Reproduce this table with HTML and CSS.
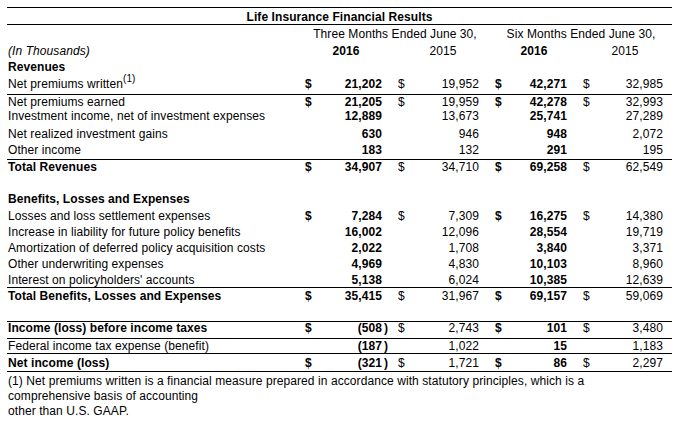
FILE: index.html
```html
<!DOCTYPE html>
<html>
<head>
<meta charset="utf-8">
<link rel="stylesheet" href="styles.css">
</head>
<body>
<div class="report">
  <div class="row title h18 pt2 bt bb"><span class="all b">Life Insurance Financial Results</span></div>
  <div class="row h17 pt2">
    <span class="lbl"></span>
    <span class="grp">Three Months Ended June 30,</span>
    <span class="grp">Six Months Ended June 30,</span>
  </div>
  <div class="row h16 pt2">
    <span class="lbl i">(In Thousands)</span>
    <span class="yr b">2016</span>
    <span class="yr yr2">2015</span>
    <span class="yr b">2016</span>
    <span class="yr">2015</span>
  </div>
  <div class="row h17 pt2"><span class="lbl b">Revenues</span></div>
  <div class="row h20 pt2 bb">
    <span class="lbl">Net premiums written<sup class="fn">(1)</sup></span>
    <span class="cur b">$</span><span class="num b">21,202</span><span class="par"></span>
    <span class="cur c2">$</span><span class="num">19,952</span><span class="par"></span>
    <span class="cur b">$</span><span class="num b">42,271</span><span class="par"></span>
    <span class="cur">$</span><span class="num">32,985</span><span class="par"></span>
  </div>
  <div class="row h14 pt0">
    <span class="lbl">Net premiums earned</span>
    <span class="cur b">$</span><span class="num b">21,205</span><span class="par"></span>
    <span class="cur c2">$</span><span class="num">19,959</span><span class="par"></span>
    <span class="cur b">$</span><span class="num b">42,278</span><span class="par"></span>
    <span class="cur">$</span><span class="num">32,993</span><span class="par"></span>
  </div>
  <div class="row h17 pt0">
    <span class="lbl">Investment income, net of investment expenses</span>
    <span class="cur"></span><span class="num b">12,889</span><span class="par"></span>
    <span class="cur"></span><span class="num">13,673</span><span class="par"></span>
    <span class="cur"></span><span class="num b">25,741</span><span class="par"></span>
    <span class="cur"></span><span class="num">27,289</span><span class="par"></span>
  </div>
  <div class="row h16 pt1">
    <span class="lbl">Net realized investment gains</span>
    <span class="cur"></span><span class="num b">630</span><span class="par"></span>
    <span class="cur"></span><span class="num">946</span><span class="par"></span>
    <span class="cur"></span><span class="num b">948</span><span class="par"></span>
    <span class="cur"></span><span class="num">2,072</span><span class="par"></span>
  </div>
  <div class="row h17 pt1">
    <span class="lbl">Other income</span>
    <span class="cur"></span><span class="num b">183</span><span class="par"></span>
    <span class="cur"></span><span class="num">132</span><span class="par"></span>
    <span class="cur"></span><span class="num b">291</span><span class="par"></span>
    <span class="cur"></span><span class="num">195</span><span class="par"></span>
  </div>
  <div class="row h17 pt0 bt">
    <span class="lbl b">Total Revenues</span>
    <span class="cur b">$</span><span class="num b">34,907</span><span class="par"></span>
    <span class="cur c2">$</span><span class="num">34,710</span><span class="par"></span>
    <span class="cur b">$</span><span class="num b">69,258</span><span class="par"></span>
    <span class="cur">$</span><span class="num">62,549</span><span class="par"></span>
  </div>
  <div class="row h16"></div>
  <div class="row h16 pt0"><span class="lbl b">Benefits, Losses and Expenses</span></div>
  <div class="row h16 pt1">
    <span class="lbl">Losses and loss settlement expenses</span>
    <span class="cur b">$</span><span class="num b">7,284</span><span class="par"></span>
    <span class="cur c2">$</span><span class="num">7,309</span><span class="par"></span>
    <span class="cur b">$</span><span class="num b">16,275</span><span class="par"></span>
    <span class="cur">$</span><span class="num">14,380</span><span class="par"></span>
  </div>
  <div class="row h16 pt1">
    <span class="lbl">Increase in liability for future policy benefits</span>
    <span class="cur"></span><span class="num b">16,002</span><span class="par"></span>
    <span class="cur"></span><span class="num">12,096</span><span class="par"></span>
    <span class="cur"></span><span class="num b">28,554</span><span class="par"></span>
    <span class="cur"></span><span class="num">19,719</span><span class="par"></span>
  </div>
  <div class="row h16 pt1">
    <span class="lbl">Amortization of deferred policy acquisition costs</span>
    <span class="cur"></span><span class="num b">2,022</span><span class="par"></span>
    <span class="cur"></span><span class="num">1,708</span><span class="par"></span>
    <span class="cur"></span><span class="num b">3,840</span><span class="par"></span>
    <span class="cur"></span><span class="num">3,371</span><span class="par"></span>
  </div>
  <div class="row h16 pt1">
    <span class="lbl">Other underwriting expenses</span>
    <span class="cur"></span><span class="num b">4,969</span><span class="par"></span>
    <span class="cur"></span><span class="num">4,830</span><span class="par"></span>
    <span class="cur"></span><span class="num b">10,103</span><span class="par"></span>
    <span class="cur"></span><span class="num">8,960</span><span class="par"></span>
  </div>
  <div class="row h15 pt1">
    <span class="lbl">Interest on policyholders' accounts</span>
    <span class="cur"></span><span class="num b">5,138</span><span class="par"></span>
    <span class="cur"></span><span class="num">6,024</span><span class="par"></span>
    <span class="cur"></span><span class="num b">10,385</span><span class="par"></span>
    <span class="cur"></span><span class="num">12,639</span><span class="par"></span>
  </div>
  <div class="row h17 pt1 bt">
    <span class="lbl b">Total Benefits, Losses and Expenses</span>
    <span class="cur b">$</span><span class="num b">35,415</span><span class="par"></span>
    <span class="cur c2">$</span><span class="num">31,967</span><span class="par"></span>
    <span class="cur b">$</span><span class="num b">69,157</span><span class="par"></span>
    <span class="cur">$</span><span class="num">59,069</span><span class="par"></span>
  </div>
  <div class="row h17"></div>
  <div class="row h18 pt0 bt bb tight">
    <span class="lbl b">Income (loss) before income taxes</span>
    <span class="cur b">$</span><span class="num b">(508</span><span class="par b">)</span>
    <span class="cur c2">$</span><span class="num">2,743</span><span class="par"></span>
    <span class="cur b">$</span><span class="num b">101</span><span class="par"></span>
    <span class="cur">$</span><span class="num">3,480</span><span class="par"></span>
  </div>
  <div class="row h15 pt0 bb">
    <span class="lbl">Federal income tax expense (benefit)</span>
    <span class="cur"></span><span class="num b">(187</span><span class="par b">)</span>
    <span class="cur"></span><span class="num">1,022</span><span class="par"></span>
    <span class="cur"></span><span class="num b">15</span><span class="par"></span>
    <span class="cur"></span><span class="num">1,183</span><span class="par"></span>
  </div>
  <div class="row h18 pt2 bb">
    <span class="lbl b">Net income (loss)</span>
    <span class="cur b">$</span><span class="num b">(321</span><span class="par b">)</span>
    <span class="cur c2">$</span><span class="num">1,721</span><span class="par"></span>
    <span class="cur b">$</span><span class="num b">86</span><span class="par"></span>
    <span class="cur">$</span><span class="num">2,297</span><span class="par"></span>
  </div>
  <p class="note">(1) Net premiums written is a financial measure prepared in accordance with statutory principles, which is a<br>comprehensive basis of accounting<br>other than U.S. GAAP.</p>
</div>
</body>
</html>
```

FILE: styles.css
```css
body {
  margin: 0;
  background: #fff;
  color: #000;
  font-family: "Liberation Sans", Arial, sans-serif;
  font-size: 12px;
  letter-spacing: 0.08px;
}

.report {
  width: 665px;
  padding: 7px 0 0 7px;
}

.row {
  display: grid;
  grid-template-columns: 293px 16px 66px 10px 18px 69px 11px 16px 61px 11px 18px 67px 9px;
  box-sizing: border-box;
  height: 16px;
  line-height: 14px;
  white-space: nowrap;
}

.h14 { height: 14px; }
.h15 { height: 15px; }
.h16 { height: 16px; }
.h17 { height: 17px; }
.h18 { height: 18px; }
.h20 { height: 20px; }

.pt0 { padding-top: 0; }
.pt1 { padding-top: 1px; }
.pt2 { padding-top: 2px; }

.bt { border-top: 1px solid #000; }
.bb { border-bottom: 1px solid #000; }

.tight { line-height: 12px; }

.all {
  grid-column: 1 / -1;
  text-align: center;
}

.grp {
  grid-column: span 6;
  text-align: center;
}

.yr {
  grid-column: span 3;
  text-align: center;
}

.yr2 { padding-left: 4px; }

.lbl { padding-left: 1px; }

.b { font-weight: bold; }
.i { font-style: italic; }

.cur { padding-left: 5px; }
.c2 { padding-left: 6px; }

.num { text-align: right; }

.par { padding-left: 2px; }

.fn {
  font-size: 10px;
  line-height: 0;
  vertical-align: 6px;
}

.note {
  margin: 0;
  padding: 2px 0 0 1px;
  line-height: 15px;
}
```
